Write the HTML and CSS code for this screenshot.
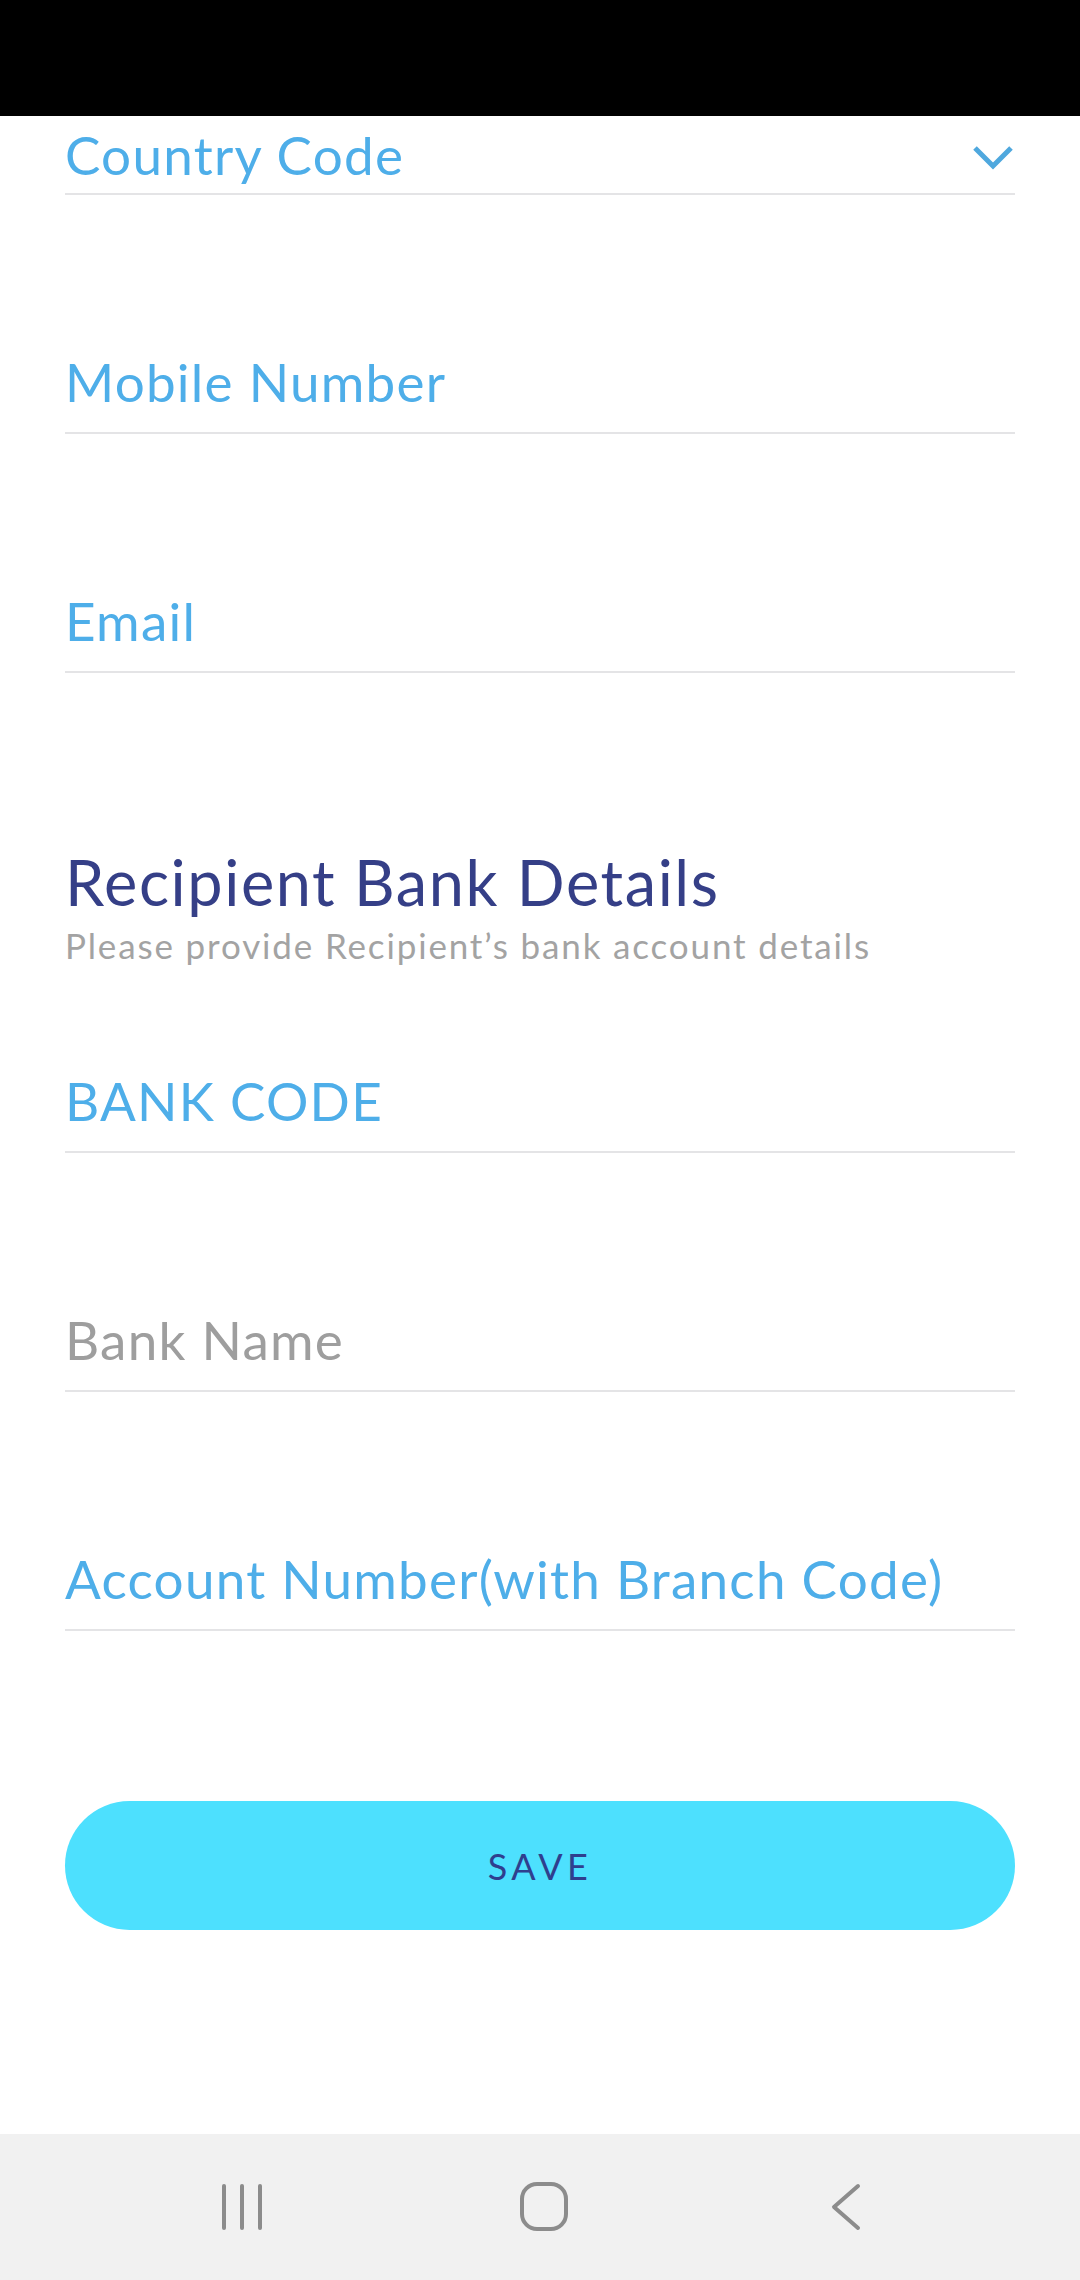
FILE: index.html
```html
<!DOCTYPE html>
<html lang="en">
<head>
    <meta charset="UTF-8">
    <meta name="viewport" content="width=device-width, initial-scale=1.0">
    <title>Recipient</title>
    <link rel="stylesheet" href="styles.css">
</head>
<body>
    <div class="status-bar"></div>

    <div class="form">
        <!-- Contact fields -->
        <div class="field field-select">
            <span class="label">Country Code</span>
            <svg class="chevron" width="40" height="26" viewBox="0 0 40 26">
                <polyline points="2,3 20,21 38,3" fill="none" stroke="#4fa8de" stroke-width="5"/>
            </svg>
        </div>
        <div class="field"><span class="label">Mobile Number</span></div>
        <div class="field"><span class="label">Email</span></div>

        <!-- Bank details -->
        <h2 class="section-title">Recipient Bank Details</h2>
        <p class="section-sub">Please provide Recipient’s bank account details</p>

        <div class="field field-first"><span class="label">BANK CODE</span></div>
        <div class="field"><span class="label muted">Bank Name</span></div>
        <div class="field"><span class="label">Account Number(with Branch Code)</span></div>

        <button class="save-btn">SAVE</button>
    </div>

    <!-- Android navigation bar -->
    <div class="nav-bar">
        <svg class="nav-icon" width="60" height="52" viewBox="0 0 60 52">
            <g stroke="#8c8c8c" stroke-width="4" stroke-linecap="round">
                <line x1="12" y1="5" x2="12" y2="47"/>
                <line x1="30" y1="5" x2="30" y2="47"/>
                <line x1="48" y1="5" x2="48" y2="47"/>
            </g>
        </svg>
        <svg class="nav-icon" width="60" height="52" viewBox="0 0 60 52">
            <rect x="8" y="3" width="44" height="45" rx="15" fill="none" stroke="#8c8c8c" stroke-width="4"/>
        </svg>
        <svg class="nav-icon" width="60" height="52" viewBox="0 0 60 52">
            <polyline points="42,5 18,26 42,47" fill="none" stroke="#8c8c8c" stroke-width="4" stroke-linecap="round" stroke-linejoin="round"/>
        </svg>
    </div>
</body>
</html>
```

FILE: styles.css
```css
* {
    margin: 0;
    padding: 0;
    box-sizing: border-box;
    font-family: Lato, "Noto Sans", sans-serif;
}
body {
    display: flex;
    flex-direction: column;
    min-height: 100vh;
    background: #fff;
}
.status-bar {
    height: 116px;
    background: #000;
}
.form {
    flex: 1;
    display: flex;
    flex-direction: column;
    padding: 0 65px;
}
.field {
    display: flex;
    align-items: center;
    justify-content: space-between;
    margin-top: 157px;
    padding-bottom: 20px;
    border-bottom: 2px solid #e4e4e6;
}
.field-select {
    margin-top: 9px;
    padding-bottom: 8px;
}
.field-first {
    margin-top: 106px;
}
.label {
    font-size: 53px;
    line-height: 60px;
    letter-spacing: 1.25px;
    color: #4eaee9;
}
.label.muted {
    color: #9e9e9e;
}
.chevron {
    margin-right: 2px;
    margin-top: 6px;
}
.section-title {
    margin-top: 174px;
    font-size: 63px;
    line-height: 70px;
    letter-spacing: 1.6px;
    font-weight: normal;
    color: #353f87;
}
.section-sub {
    margin-top: 8px;
    font-size: 35px;
    line-height: 40px;
    letter-spacing: 1.85px;
    color: #a3a3a3;
}
.save-btn {
    margin-top: 170px;
    height: 129px;
    border: none;
    border-radius: 65px;
    background: #4de0fe;
    color: #2f3f8e;
    font-size: 36px;
    letter-spacing: 4.5px;
    cursor: pointer;
}
.nav-bar {
    height: 146px;
    background: #f1f1f1;
    display: flex;
    align-items: center;
    justify-content: center;
    gap: 242px;
    padding-left: 8px;
}
.nav-icon {
    flex: none;
}
```
